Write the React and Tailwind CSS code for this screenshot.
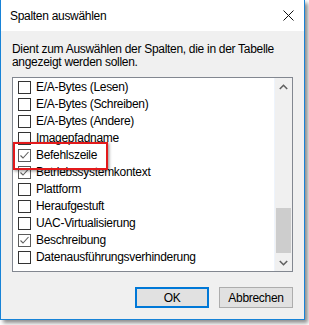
import React from 'react'

const items = [
  { label: 'E/A-Bytes (Lesen)', checked: false },
  { label: 'E/A-Bytes (Schreiben)', checked: false },
  { label: 'E/A-Bytes (Andere)', checked: false },
  { label: 'Imagepfadname', checked: false },
  { label: 'Befehlszeile', checked: true },
  { label: 'Betriebssystemkontext', checked: true },
  { label: 'Plattform', checked: false },
  { label: 'Heraufgestuft', checked: false },
  { label: 'UAC-Virtualisierung', checked: false },
  { label: 'Beschreibung', checked: true },
  { label: 'Datenausführungsverhinderung', checked: false },
]

function CheckBox({ checked }) {
  return (
    <div className={"w-[13px] h-[13px] shrink-0 border bg-white flex items-center justify-center " + (checked ? "border-[#5a5a5a]" : "border-[#333333]")}>
      {checked && (
        <svg width="11" height="11" viewBox="0 0 11 11">
          <path d="M1.5 5.5 L4 8 L9.5 2" fill="none" stroke="#5f5f5f" strokeWidth="1.1" />
        </svg>
      )}
    </div>
  )
}

export default function App() {
  return (
    <div className="w-[309px] h-[325px] bg-white relative" style={{ fontFamily: '"Liberation Sans", Arial, sans-serif' }}>
      <div className="w-[305px] h-[320px] bg-[#f0f0f0] border-l border-r border-b border-[#1883d7] shadow-[3px_3px_4px_rgba(0,0,0,0.45)] flex flex-col text-[12px] tracking-[-0.3px] text-black overflow-hidden">
        {/* Title bar */}
        <div className="h-[31px] bg-white flex items-center justify-between pl-[9px] pr-[10px] shrink-0">
          <span className="text-[12px]">Spalten auswählen</span>
          <svg width="11" height="11" viewBox="0 0 11 11">
            <path d="M0.5 0.5 L10.5 10.5 M10.5 0.5 L0.5 10.5" stroke="#111" strokeWidth="1" />
          </svg>
        </div>

        {/* Body */}
        <div className="flex flex-col px-[11px] pt-[12px]">
          <p className="leading-[13px] whitespace-nowrap">
            Dient zum Auswählen der Spalten, die in der Tabelle<br />angezeigt werden sollen.
          </p>

          <div className="relative mt-[8px] h-[195px] border border-[#828790] bg-white flex">
            <div className="flex-1 flex flex-col pt-[1px] pl-[5px] overflow-hidden">
              {items.map((item) => (
                <div key={item.label} className="h-[17px] shrink-0 flex items-center gap-[5px] whitespace-nowrap">
                  <CheckBox checked={item.checked} />
                  <span className="leading-[17px]">{item.label}</span>
                </div>
              ))}
            </div>
            {/* Scrollbar */}
            <div className="w-[18px] bg-[#f0f0f0] border-l border-[#eef4fc] flex flex-col items-center shrink-0">
              <div className="h-[17px] flex items-center justify-center w-full">
                <svg width="9" height="6" viewBox="0 0 9 6">
                  <path d="M0.8 5 L4.5 1.3 L8.2 5" fill="none" stroke="#606060" strokeWidth="1.6" />
                </svg>
              </div>
              <div className="flex-1 w-full flex flex-col justify-end px-[1px]">
                <div className="h-[45px] bg-[#cdcdcd] mb-[1px]" />
              </div>
              <div className="h-[17px] flex items-center justify-center w-full">
                <svg width="9" height="6" viewBox="0 0 9 6">
                  <path d="M0.8 1 L4.5 4.7 L8.2 1" fill="none" stroke="#606060" strokeWidth="1.6" />
                </svg>
              </div>
            </div>

            {/* Highlight */}
            <div className="absolute left-0 top-[64px] w-[95px] h-[28px] border-2 border-[#e3191b] shadow-[1px_1px_3px_rgba(0,0,0,0.45)]" />
          </div>

          <div className="flex justify-end gap-[10px] mt-[15px]">
            <button className="w-[74px] h-[21px] bg-[#e1e1e1] border-2 border-[#0078d7] text-[12px] leading-none">OK</button>
            <button className="w-[74px] h-[21px] bg-[#e1e1e1] border border-[#adadad] text-[12px] leading-none">Abbrechen</button>
          </div>
        </div>
      </div>
    </div>
  )
}
